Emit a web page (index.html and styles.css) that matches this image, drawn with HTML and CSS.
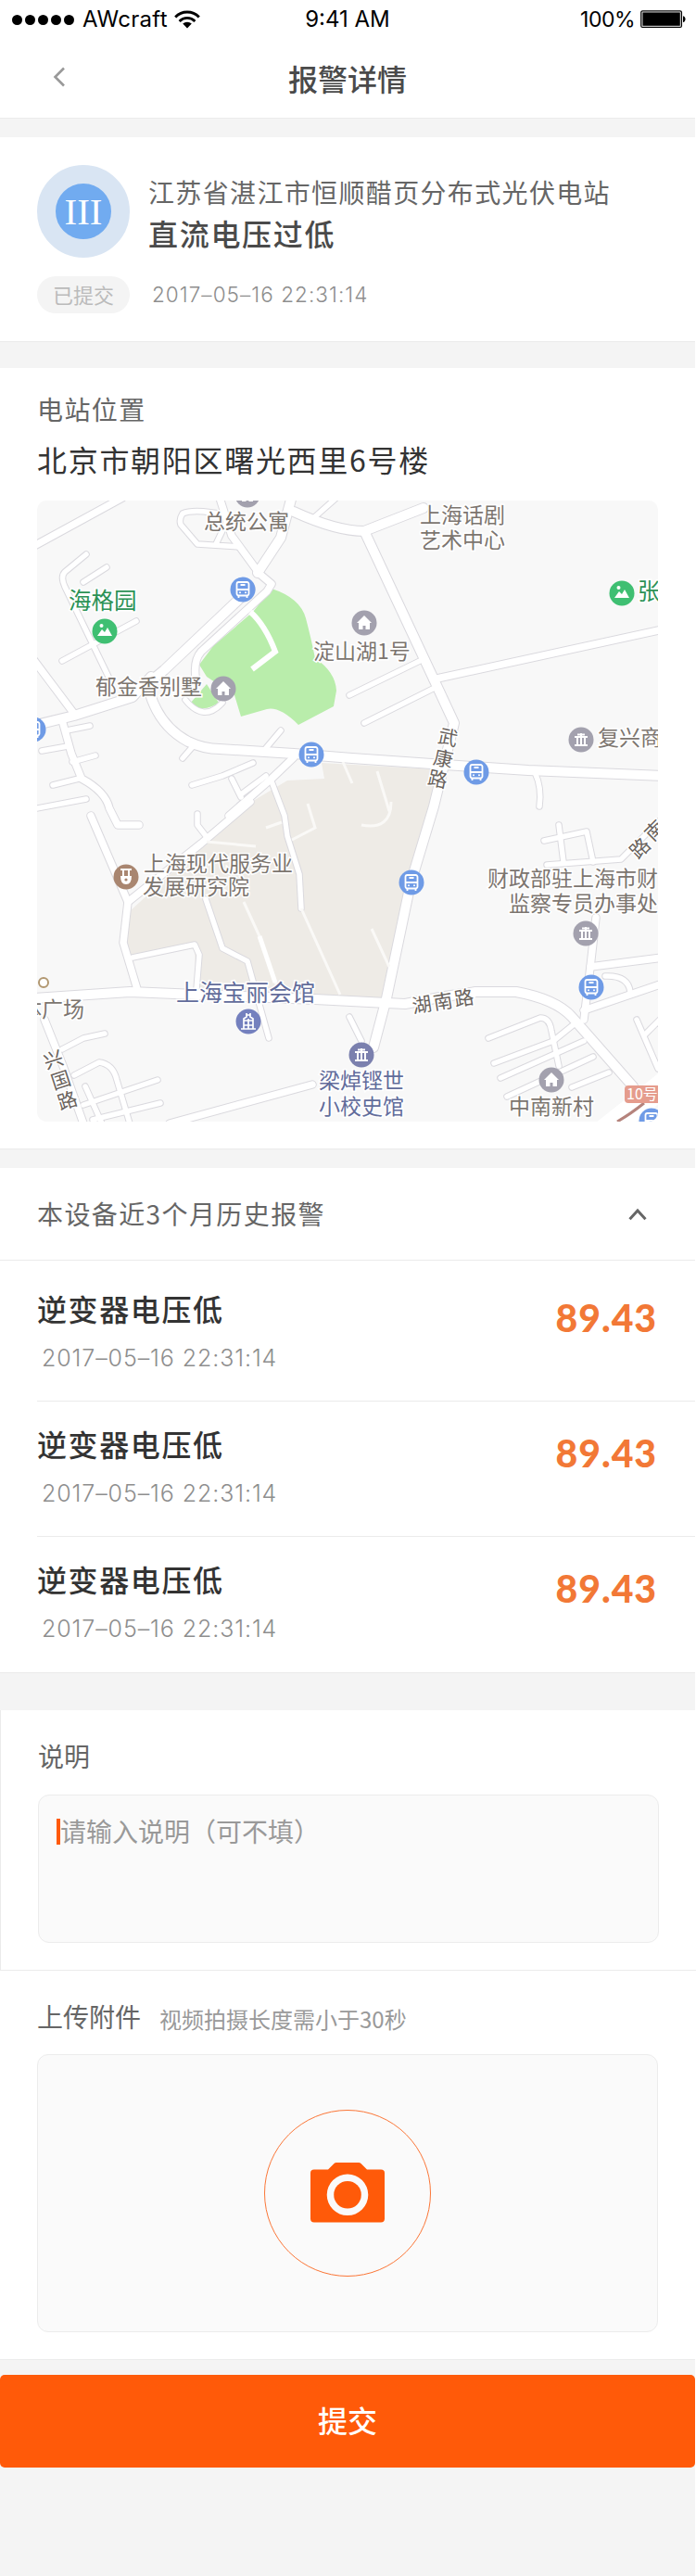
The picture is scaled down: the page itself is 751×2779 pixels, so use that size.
FILE: index.html
```html
<!DOCTYPE html>
<html lang="zh-CN">
<head>
<meta charset="utf-8">
<title>报警详情</title>
<link rel="stylesheet" href="styles.css">
</head>
<body>
<svg class="defs" width="0" height="0">
  <defs>
    <g id="bus"><circle r="13.5" fill="#6f9be6"/><rect x="-6.5" y="-8" width="13" height="14.5" rx="2" fill="none" stroke="#fff" stroke-width="1.8"/><path d="M-6 0H6M-2.5 -5H2.5M-4.5 6.5V9M4.5 6.5V9" stroke="#fff" stroke-width="1.8"/><circle cx="-3" cy="3.2" r="1" fill="#fff"/><circle cx="3" cy="3.2" r="1" fill="#fff"/></g>
    <g id="home"><circle r="13.5" fill="#a3a1ae"/><path d="M0 -8L8 0H6V7H1.5V3H-1.5V7H-6V0H-8Z" fill="#fff"/></g>
    <g id="park"><circle r="13.5" fill="#3fbf72"/><path d="M-8 5L-3 -2L0 1L3 -4L8 5Z" fill="#fff"/><circle cx="-3.5" cy="-6" r="2" fill="#fff"/></g>
    <g id="hall"><circle r="13.5"/><path d="M-7 -3H7M-7 6H7M-4 -3V6M0 -7V6M4 -3V6M-4 -5.5H4" stroke="#fff" stroke-width="2" fill="none"/></g>
    <g id="roads" fill="none" stroke-linecap="round" stroke-linejoin="round">
      <g class="wide">
        <path d="M275 -5L263 40L238 78"/><path d="M230 95L137 183L120 197"/><path d="M-5 243L40 232L103 212L123 190"/>
        <path d="M122 209Q133 244 163 260Q180 268 197 268L277 273L340 278L440 285L530 291L675 297"/>
        <path d="M277 12Q323 33 353 33L417 8"/><path d="M355 37L430 197L450 240L428 330L403 413L377 537L363 590"/>
        <path d="M-5 537L100 530L300 538L397 543L440 535L473 530L517 530Q560 538 577 557L643 632"/>
      </g>
      <g class="mid">
        <path d="M-5 50L92 -3"/><path d="M197 -3L210 38L240 79L253 90L248 98L177 163Q169 172 171 190"/>
        <path d="M-5 170L40 230"/><path d="M27 237L37 273L48 300Q74 314 78 332L87 350H110"/>
        <path d="M207 340L253 300L277 277"/><path d="M427 193L675 139"/>
        <path d="M58 340L98 433L93 477L108 527"/><path d="M98 433L177 370L230 325"/>
        <path d="M8 560L28 610L50 672"/><path d="M143 672L297 630"/><path d="M603 450L597 503L590 560"/>
        <path d="M597 503L675 493"/><path d="M590 550L675 521"/>
      </g>
      <g class="thin">
        <path d="M206 16Q170 8 157 14Q153 20 155 26L173 47L218 50M193 47L206 20"/><path d="M297 20L323 -3"/>
        <path d="M53 58L30 77Q25 82 30 93L77 190"/><path d="M75 72L50 88"/><path d="M27 173L107 130"/>
        <path d="M160 215Q180 240 200 218"/>
        <path d="M32 248L57 243"/><path d="M5 270L33 265"/><path d="M38 282L63 275"/><path d="M17 307L45 300"/><path d="M-5 333L53 322"/>
        <path d="M157 278L170 263"/><path d="M247 267L263 248"/><path d="M167 307L200 297L233 283"/><path d="M210 300L220 320"/><path d="M220 317L247 297"/><path d="M253 303L267 340L270 362L283 403L285 440"/>
        <path d="M337 210L413 173"/><path d="M353 240L427 203"/><path d="M537 293Q545 310 542 330"/>
        <path d="M173 338V350L183 363"/><path d="M182 430L200 483L227 497L250 580"/><path d="M103 493L170 479L175 490L172 527"/>
        <path d="M27 592L50 580L73 575"/><path d="M40 620L67 606Q82 608 86 625L100 672"/><path d="M50 652L130 625"/><path d="M60 668L133 650"/><path d="M52 632L70 672"/>
        <path d="M337 557L350 583"/><path d="M487 580L543 558Q553 558 555 572L563 610"/><path d="M493 607L557 583L583 562"/><path d="M500 623L590 583"/><path d="M507 643L600 600"/><path d="M577 633L617 617"/>
        <path d="M613 513Q638 512 640 530"/><path d="M547 367L593 357L600 390"/><path d="M563 350L568 390"/><path d="M550 393L630 387L675 342"/><path d="M647 560L670 613"/><path d="M656 576L675 557"/>
      </g>
    </g>
  </defs>
</svg>
<div class="page">
  <header class="status">
    <div class="carrier">
      <span class="dots"><i></i><i></i><i></i><i></i><i></i></span>
      <span class="carrier-name">AWcraft</span>
      <svg class="wifi" width="28" height="20" viewBox="0 0 28 20"><g fill="none" stroke="#000" stroke-width="2.9"><path d="M1.2 7.4A18 18 0 0 1 26.8 7.4"/><path d="M5.6 11.9A11.8 11.8 0 0 1 22.4 11.9"/></g><path d="M9.2 14.6A7 7 0 0 1 18.8 14.6L14 19.5Z"/></svg>
    </div>
    <span class="clock">9:41 AM</span>
    <div class="power"><span>100%</span>
      <svg width="50" height="20" viewBox="0 0 50 20"><rect x=".8" y=".8" width="43.6" height="17.6" rx="1.5" fill="#fff" stroke="#000" stroke-width="1.3"/><rect x="2.4" y="2.4" width="40.4" height="14.4"/><path d="M46 6.2C49.4 6.6 49.4 12.6 46 13Z"/></svg>
    </div>
  </header>
  <nav class="nav">
    <svg class="back" width="14" height="22" viewBox="0 0 14 22"><path d="M12 1.5L2.5 11L12 20.5" fill="none" stroke="#999" stroke-width="2.6"/></svg>
    <h1>报警详情</h1>
  </nav>

  <section class="card alarm">
    <div class="alarm-main">
      <div class="level"><span>III</span></div>
      <div>
        <p class="station">江苏省湛江市恒顺醋页分布式光伏电站</p>
        <h2>直流电压过低</h2>
      </div>
    </div>
    <div class="alarm-meta"><span class="pill">已提交</span><time>2017–05–16 22:31:14</time></div>
  </section>

  <section class="card place">
    <p class="label">电站位置</p>
    <p class="address">北京市朝阳区曙光西里6号楼</p>
    <svg class="map" viewBox="0 0 670 670">
      <rect width="670" height="670" fill="#f8f8f8"/>
      <path d="M307 283L430 290L428 330L403 413L373 540L303 534L200 532L103 527L90 480L100 443L177 373L223 330L270 302L310 300Z" fill="#eeebe6"/>
      <path d="M103 493L170 483L172 527L110 527Z" fill="#f8f8f8"/>
      <path d="M253 95Q284 105 290 127Q296 150 300 170Q322 185 323 205L320 222L282 242Q262 222 248 225L220 233L213 210L183 190L175 177L190 157L233 120Z" fill="#b9edab"/>
      <path d="M183 198L196 218Q178 230 165 219Z" fill="#b9edab"/>
      <use href="#roads" class="casing"/>
      <use href="#roads" class="surface"/>
      <path d="M230 120Q246 134 257 163L232 182" fill="none" stroke="#fff" stroke-width="6"/>
      <path d="M600 690L680 627" stroke="#fff" stroke-width="26"/>
      <path d="M626 670Q640 662 655 650" stroke="#b5837c" stroke-width="3" fill="none"/>
      <path d="M223 433L240 470L258 522M285 440L327 533M183 368L236 373M350 350Q382 356 382 325M361 462L380 503M330 282L340 305M367 292L380 335M264 347L247 353M292 327L300 353L275 366" fill="none" stroke="#faf9f7" stroke-width="3"/>
      <path d="M240 470L257 520" stroke="#fff" stroke-width="5"/>

      <use href="#bus" x="222" y="96"/><use href="#bus" x="296" y="274"/><use href="#bus" x="-4" y="247"/><use href="#bus" x="474" y="293"/><use href="#bus" x="404" y="412"/><use href="#bus" x="598" y="525"/><use href="#bus" x="663" y="669"/>
      <use href="#park" x="73" y="141"/><use href="#park" x="631" y="100"/>
      <use href="#home" x="201" y="203"/><use href="#home" x="353" y="132"/><use href="#home" x="555" y="625"/><use href="#home" x="227" y="-6"/>
      <use href="#hall" x="587" y="258" fill="#a3a1ae"/><use href="#hall" x="592" y="467" fill="#a3a1ae"/><use href="#hall" x="350" y="598" fill="#7b80ae"/>
      <g transform="translate(96 406)"><circle r="13.5" fill="#a98670"/><path d="M-6 -8H6M-3 -7L-3 -1M3 -7V-1" stroke="#fff" stroke-width="2"/><path d="M-6 -1H6Q6 8 0 8Q-6 8 -6 -1Z" fill="#fff"/><circle cy="3" r="1.6" fill="#a98670"/></g>
      <g transform="translate(228 562)"><circle r="13.5" fill="#7480be"/><path d="M-5 8V-3L-2 -5V-9M5 8V-3L2 -5V-9M-2 -7H2M-8 8H8M-5 -1H5M-5 4H5M0 -3V8" fill="none" stroke="#fff" stroke-width="1.7"/></g>
      <circle cx="7" cy="520" r="5" fill="#fff" stroke="#b19770" stroke-width="2"/>
      <rect x="634" y="631" width="40" height="19" rx="4" fill="#e59c8d"/>

      <g class="names">
        <text x="180" y="31">总统公寓</text><text x="63" y="209">郁金香别墅</text><text x="298" y="171">淀山湖1号</text>
        <text x="413" y="24">上海话剧</text><text x="413" y="51">艺术中心</text><text x="605" y="264">复兴商</text>
        <text x="115" y="400">上海现代服务业</text><text x="114" y="425">发展研究院</text><text x="-18" y="557">体广场</text>
        <text x="486" y="416">财政部驻上海市财</text><text x="509" y="443">监察专员办事处</text><text x="509" y="662">中南新村</text>
        <g class="green"><text x="34" y="117">海格园</text><text x="648" y="107">张</text></g>
        <g class="violet"><text class="big" x="150" y="540">上海宝丽会馆</text><text x="304" y="634">梁焯铿世</text><text x="304" y="662">小校史馆</text></g>
        <g class="street">
          <text transform="translate(443 255) rotate(12)" x="-10" y="8">武</text><text transform="translate(438 278) rotate(12)" x="-10" y="8">康</text><text transform="translate(432 300) rotate(12)" x="-10" y="8">路</text>
          <text transform="translate(17 603) rotate(-18)" x="-10" y="8">兴</text><text transform="translate(25 625) rotate(-18)" x="-10" y="8">国</text><text transform="translate(32 647) rotate(-18)" x="-10" y="8">路</text>
          <text transform="translate(406 553) rotate(-9)" letter-spacing="2">湖南路</text>
          <text transform="translate(650 375) rotate(-45)" x="-10" y="8">路</text><text transform="translate(666 356) rotate(-45)" x="-10" y="8">南</text>
        </g>
      </g>
      <text class="exit" x="636" y="646">10号</text>
    </svg>
  </section>

  <section class="card history">
    <div class="history-head"><p class="label">本设备近3个月历史报警</p>
      <svg width="20" height="14" viewBox="0 0 20 14"><path d="M1.5 12.2L10 3L18.5 12.2" fill="none" stroke="#666" stroke-width="3"/></svg></div>
    <ul>
      <li><div><h3>逆变器电压低</h3><time>2017–05–16 22:31:14</time></div><b>89.43</b></li>
      <li><div><h3>逆变器电压低</h3><time>2017–05–16 22:31:14</time></div><b>89.43</b></li>
      <li><div><h3>逆变器电压低</h3><time>2017–05–16 22:31:14</time></div><b>89.43</b></li>
    </ul>
  </section>

  <section class="note">
    <p class="label">说明</p>
    <div class="field"><i class="caret"></i><span>请输入说明（可不填）</span></div>
  </section>

  <section class="card upload">
    <div class="upload-head"><p class="label">上传附件</p><small>视频拍摄长度需小于30秒</small></div>
    <div class="drop"><div class="shutter">
      <svg width="80" height="65" viewBox="0 0 80 65"><path fill="#ff5a09" fill-rule="evenodd" d="M28 0H52Q53.500 0 54.500 1L61 7.500H76Q80 7.500 80 11V60.500Q80 64.500 76 64.500H4Q0 64.500 0 60.500V11Q0 7.500 4 7.500H19L25.500 1Q26.500 0 28 0ZM40 12.500A22.300 22.300 0 1 0 40 57.100A22.300 22.300 0 1 0 40 12.500Z"/><circle cx="40" cy="34.800" r="14.800" fill="#ff5a09"/></svg>
    </div></div>
  </section>

  <button class="submit">提交</button>
</div>
</body>
</html>
```
FILE: styles.css
```css
* { box-sizing: border-box; margin: 0; padding: 0; }
body {
  background: #fff;
  font-family: "Noto Sans CJK SC", sans-serif;
  color: #333;
}
.defs { position: absolute; }
.page { width: 750px; height: 2779px; background: #f4f4f4; }
p, h1, h2, h3 { font-weight: 400; white-space: nowrap; }

.status {
  display: grid;
  grid-template-columns: 1fr auto 1fr;
  align-items: center;
  height: 40px;
  padding: 1px 9px 0 13px;
  background: #fff;
  color: #000;
  font: 23px/40px Inter, sans-serif;
}
.carrier, .power { display: flex; align-items: center; }
.power { justify-content: flex-end; gap: 6px; letter-spacing: -0.5px; }
.clock { padding-right: 4px; font-size: 24px; }
.carrier-name { font-size: 24px; letter-spacing: 0.3px; }
.dots { display: flex; gap: 3px; margin-right: 9px; }
.dots i { width: 11px; height: 11px; border-radius: 50%; background: #000; }
.wifi { margin-left: 7px; }

.nav {
  display: grid;
  grid-template-columns: 58px 1fr 58px;
  align-items: center;
  height: 88px;
  background: #fff;
  border-bottom: 1px solid #ebebeb;
}
.back { justify-self: end; margin-right: -13px; margin-top: -1px; }
.nav h1 { font-size: 32px; line-height: 82px; font-weight: 500; color: #4a4a4a; text-align: center; }

.card { background: #fff; border-bottom: 1px solid #ebebeb; }
.label { font-size: 28px; line-height: 32px; color: #666; letter-spacing: 1.4px; }

.alarm { margin-top: 20px; height: 221px; padding: 30px 40px 0; }
.alarm-main { display: flex; gap: 20px; height: 120px; }
.level {
  display: grid;
  place-items: center;
  width: 100px; height: 100px;
  border: 20px solid #d9e5f3;
  border-radius: 50%;
  background: #71abf0;
}
.level span { font: 41px/56px "Liberation Serif", serif; color: #fff; }
.station { margin-top: 13px; font-size: 28px; line-height: 32px; color: #666; letter-spacing: 1.35px; }
.alarm h2 { margin-top: 10px; font-size: 32px; line-height: 36px; font-weight: 500; color: #4a4a4a; letter-spacing: 1.7px; }
.alarm-meta { display: flex; align-items: center; gap: 24px; }
.pill { width: 100px; height: 40px; border-radius: 20px; background: #f4f4f4; color: #bbb; font-size: 22px; line-height: 38px; text-align: center; }
time { font-family: Inter, sans-serif; font-weight: 300; color: #8e8e8e; }
.alarm-meta time { font-size: 22.5px; line-height: 36px; letter-spacing: 1.05px; }

.place { margin-top: 28px; height: 843px; padding: 28px 40px 0; }
.address { margin-top: 18px; font-size: 32px; line-height: 40px; letter-spacing: 1.7px; }
.map { display: block; width: 670px; height: 670px; margin-top: 25px; border-radius: 10px; }
/* --edge widens every road so that the casing shows beside the surface */
.casing { --edge: 2px; stroke: #dad9de; }
.surface { --edge: 0px; stroke: #fff; }
.wide { stroke-width: calc(10px + var(--edge)); }
.mid { stroke-width: calc(7.5px + var(--edge)); }
.thin { stroke-width: calc(5.5px + var(--edge)); }
.names text { font-size: 23px; fill: #7c756f; stroke: #fff; stroke-width: 3px; paint-order: stroke; }
.names .green text { fill: #2c9256; font-size: 24.5px; }
.names .violet text { fill: #626c9b; }
.names .violet .big { font-size: 25px; }
.names .street text { font-size: 21px; fill: #6a635d; }
.exit { font-size: 16px; fill: #fff; }

.history { margin-top: 20px; }
.history-head { display: flex; justify-content: space-between; align-items: center; height: 100px; padding: 0 52px 0 40px; border-bottom: 1px solid #ebebeb; }
.history-head .label { margin-top: -2px; }
.history ul { list-style: none; padding: 6px 0 0 40px; }
.history li { display: flex; justify-content: space-between; height: 146px; padding: 27px 41px 0 0; border-bottom: 1px solid #ebebeb; }
.history li:last-child { border-bottom: 0; }
.history h3 { font-size: 32px; line-height: 36px; font-weight: 500; letter-spacing: 1.6px; }
.history time { display: block; margin: 18px 0 0 5px; font-size: 25px; line-height: 36px; letter-spacing: 0.9px; }
.history b { font: 900 41px/48px Lato, sans-serif; color: #f27836; letter-spacing: 0.9px; padding-top: 5px; }

.note { width: 751px; height: 281px; margin-top: 40px; padding: 33px 40px 0; background: #fff; border-left: 1px solid #ebebeb; border-bottom: 1px solid #ebebeb; }
.note .label, .upload .label { letter-spacing: 0; }
.field { display: flex; height: 160px; margin-top: 26px; padding: 25px 19px; border: 1px solid #ececec; border-radius: 12px; background: #fafafa; color: #999; font-size: 28px; line-height: 27px; }
.caret { width: 4px; height: 28px; background: #ff5a09; }

.upload { height: 420px; padding: 33px 40px 0; }
.upload-head { display: flex; align-items: center; gap: 20px; height: 32px; }
.upload small { font-size: 24px; line-height: 32px; color: #999; padding-top: 5px; }
.drop { display: grid; place-items: center; height: 300px; margin-top: 25px; border: 1px solid #ececec; border-radius: 12px; background: #fafafa; }
.shutter { display: grid; place-items: center; width: 180px; height: 180px; padding-bottom: 2px; border: 1.5px solid #fb7637; border-radius: 50%; }

.submit { display: block; width: 750px; height: 100px; margin-top: 16px; border: 0; border-radius: 5px; background: #ff5a09; color: #fff; font: 500 32px/96px "Noto Sans CJK SC", sans-serif; padding-bottom: 4px; }
```
